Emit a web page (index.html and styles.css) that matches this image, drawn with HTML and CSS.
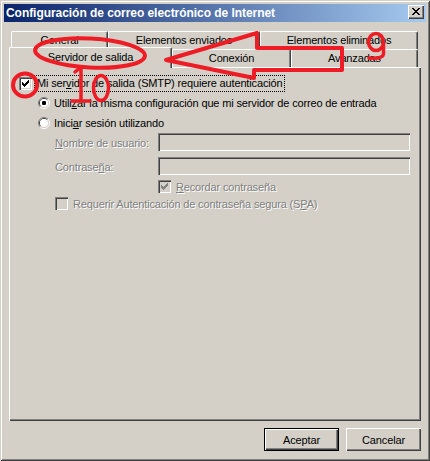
FILE: index.html
```html
<!DOCTYPE html>
<html lang="es">
<head>
<meta charset="utf-8">
<title>Configuración de correo electrónico de Internet</title>
<link rel="stylesheet" href="styles.css">
</head>
<body>
<div class="window">
  <div class="titlebar">
    <span class="title">Configuración de correo electrónico de Internet</span>
    <div class="close">
      <svg width="16" height="14" viewBox="0 0 16 14"><path d="M4 3h2v1H4zM10 3h2v1h-2zM5 4h2v1H5zM9 4h2v1H9zM6 5h4v1H6zM7 6h2v1H7zM6 7h4v1H6zM5 8h2v1H5zM9 8h2v1H9zM4 9h2v1H4zM10 9h2v1h-2z" fill="#000"/></svg>
    </div>
  </div>
  <div class="client">
    <div class="tabs">
      <div class="tabrow row1">
        <div class="tab t-general">General</div>
        <div class="tab t-enviados">Elementos enviados</div>
        <div class="tab t-eliminados">Elementos eliminados</div>
      </div>
      <div class="tabrow row2">
        <div class="tab selected t-servidor">Servidor de salida</div>
        <div class="tab t-conexion">Conexión</div>
        <div class="tab t-avanzadas">Avanzadas</div>
      </div>
    </div>
    <div class="panel">
      <div class="row row-auth">
        <span class="cb"><svg width="13" height="13" viewBox="0 0 13 13"><path d="M3 5h1v3H3zM4 6h1v3H4zM5 7h1v3H5zM6 6h1v3H6zM7 5h1v3H7zM8 4h1v3H8zM9 3h1v3H9z" fill="#000"/></svg></span>
        <span class="focus">Mi ser<u>v</u>idor de salida (SMTP) requiere autenticación</span>
      </div>
      <div class="row row-radio first">
        <svg class="radio" width="12" height="12" viewBox="0 0 12 12">
          <path d="M2.1 9.9A5.5 5.5 0 0 1 9.9 2.1" stroke="#808080" fill="none"/>
          <path d="M9.9 2.1A5.5 5.5 0 0 1 2.1 9.9" stroke="#fff" fill="none"/>
          <path d="M2.8 9.2A4.5 4.5 0 0 1 9.2 2.8" stroke="#404040" fill="none"/>
          <path d="M9.2 2.8A4.5 4.5 0 0 1 2.8 9.2" stroke="#D4D0C8" fill="none"/>
          <circle cx="6" cy="6" r="4" fill="#fff"/>
          <rect x="4" y="4" width="4" height="4" rx="1.2" fill="#000"/>
        </svg>
        <span class="lbl">Utili<u>z</u>ar la misma configuración que mi servidor de correo de entrada</span>
      </div>
      <div class="row row-radio second">
        <svg class="radio" width="12" height="12" viewBox="0 0 12 12">
          <path d="M2.1 9.9A5.5 5.5 0 0 1 9.9 2.1" stroke="#808080" fill="none"/>
          <path d="M9.9 2.1A5.5 5.5 0 0 1 2.1 9.9" stroke="#fff" fill="none"/>
          <path d="M2.8 9.2A4.5 4.5 0 0 1 9.2 2.8" stroke="#404040" fill="none"/>
          <path d="M9.2 2.8A4.5 4.5 0 0 1 2.8 9.2" stroke="#D4D0C8" fill="none"/>
          <circle cx="6" cy="6" r="4" fill="#fff"/>
        </svg>
        <span class="lbl">Inici<u>a</u>r sesión utilizando</span>
      </div>
      <div class="row row-field user">
        <span class="flabel disabled"><u>N</u>ombre de usuario:</span>
        <span class="field"></span>
      </div>
      <div class="row row-field pass">
        <span class="flabel disabled">Contrase<u>ñ</u>a:</span>
        <span class="field"></span>
      </div>
      <div class="row row-check remember">
        <span class="cb off"><svg width="13" height="13" viewBox="0 0 13 13"><path d="M3 5h1v3H3zM4 6h1v3H4zM5 7h1v3H5zM6 6h1v3H6zM7 5h1v3H7zM8 4h1v3H8zM9 3h1v3H9z" fill="#808080"/></svg></span>
        <span class="lbl disabled"><u>R</u>ecordar contraseña</span>
      </div>
      <div class="row row-check spa">
        <span class="cb off"></span>
        <span class="lbl disabled">Requerir Autenticación de contraseña segura (S<u>P</u>A)</span>
      </div>
    </div>
    <div class="buttons">
      <button class="btn default">Aceptar</button>
      <button class="btn">Cancelar</button>
    </div>
  </div>
  <svg class="annot" width="430" height="461" viewBox="0 0 430 461">
    <g fill="none" stroke="#EE1C25" stroke-linecap="round" stroke-linejoin="round">
      <ellipse cx="90" cy="53" rx="55" ry="14.5" stroke-width="4" transform="rotate(3 90 53)"/>
      <path d="M166 60 L257 33 L257 48 L342 48 L342 70 L254 70 L254 78 Z" stroke-width="4"/>
      <ellipse cx="25" cy="85" rx="12" ry="11.5" stroke-width="4"/>
      <path d="M75 72 L81 67 L81 101 M72 101 L90 101" stroke-width="3.5"/>
      <ellipse cx="101" cy="88" rx="7.5" ry="12.5" stroke-width="3.5"/>
      <ellipse cx="376" cy="42" rx="7.5" ry="8.5" stroke-width="3.5"/>
      <path d="M383.5 43 L383.5 54 Q383 59 369 58" stroke-width="3.5"/>
    </g>
  </svg>
</div>
</body>
</html>
```
FILE: styles.css
```css
* { box-sizing: border-box; }
html, body { margin: 0; padding: 0; }
body {
  width: 430px;
  height: 461px;
  overflow: hidden;
  background: #D4D0C8;
  font-family: "Liberation Sans", Arial, sans-serif;
  font-size: 11px;
  letter-spacing: -0.15px;
  color: #000;
}
u { text-decoration: underline; text-underline-offset: 1px; }

.window {
  position: relative;
  width: 430px;
  height: 461px;
  padding: 4px;
  background: #D4D0C8;
  display: flex;
  flex-direction: column;
  box-shadow: inset 1px 1px #D4D0C8, inset -1px -1px #404040, inset 2px 2px #fff, inset -2px -2px #808080;
}

.titlebar {
  height: 18px;
  flex: none;
  display: flex;
  align-items: center;
  padding: 0 2px 0 2px;
  background: linear-gradient(to right, #0A246A, #A6CAF0);
}
.title {
  color: #fff;
  font-weight: bold;
  font-size: 12px;
  letter-spacing: -0.05px;
  white-space: nowrap;
}
.close {
  margin-left: auto;
  align-self: flex-start;
  margin-top: 1px;
  width: 16px;
  height: 14px;
  background: #D4D0C8;
  box-shadow: inset 1px 1px #fff, inset -1px -1px #404040, inset -2px -2px #808080;
}
.close svg { display: block; }

.client {
  flex: 1;
  display: flex;
  flex-direction: column;
  padding: 9px 5px 6px 5px;
}

.tabs { flex: none; }
.tabrow {
  display: flex;
  align-items: flex-start;
  height: 18px;
}
.row1 { padding-left: 2px; }
.tab {
  height: 18px;
  border-top: 1px solid #fff;
  border-left: 1px solid #fff;
  border-right: 1px solid #404040;
  border-radius: 2px 2px 0 0;
  box-shadow: inset -1px 0 #808080;
  background: #D4D0C8;
  text-align: center;
  line-height: 17px;
  white-space: nowrap;
}
.t-general { width: 97px; }
.t-enviados { width: 152px; }
.t-eliminados { width: 158px; }
.t-servidor { width: 163px; }
.t-conexion { width: 119px; }
.t-avanzadas { width: 127px; }
.tab.selected {
  position: relative;
  z-index: 2;
  height: 21px;
  margin-top: -2px;
  line-height: 19px;
}

.panel {
  flex: 1;
  padding: 8px 0 0 10px;
  box-shadow: inset 1px 1px #fff, inset -1px -1px #404040, inset -2px -2px #808080;
}
.row { display: flex; align-items: center; }
.row-auth { height: 17px; }
.cb {
  flex: none;
  width: 13px;
  height: 13px;
  background: #fff;
  box-shadow: inset 1px 1px #808080, inset 2px 2px #404040, inset -1px -1px #fff, inset -2px -2px #D4D0C8;
}
.cb svg { display: block; }
.cb.off { background: #D4D0C8; }
.focus {
  margin-left: 2px;
  height: 17px;
  line-height: 15px;
  padding: 0 2px 0 2px;
  border: 1px dotted #000;
  white-space: nowrap;
}
.row-radio { height: 14px; margin-left: 19px; }
.row-radio.first { margin-top: 4px; }
.row-radio.second { margin-top: 6px; }
.radio { flex: none; display: block; }
.row-radio .lbl { margin-left: 4px; white-space: nowrap; }

.row-field { height: 18px; margin-left: 36px; }
.row-field.user { margin-top: 3px; }
.row-field.pass { margin-top: 6px; }
.flabel { width: 103px; padding-top: 2px; white-space: nowrap; }
.field {
  width: 252px;
  height: 18px;
  background: #D4D0C8;
  box-shadow: inset 1px 1px #808080, inset 2px 2px #404040, inset -1px -1px #fff, inset -2px -2px #D4D0C8;
}
.row-check { height: 13px; }
.row-check.remember { margin-top: 5px; margin-left: 139px; }
.row-check.spa { margin-top: 4px; margin-left: 36px; }
.row-check .lbl { margin-left: 5px; white-space: nowrap; }

.disabled { color: #808080; text-shadow: 1px 1px 0 #fff; }

.buttons {
  flex: none;
  display: flex;
  justify-content: flex-end;
  gap: 7px;
  margin-top: 7px;
}
.btn {
  width: 75px;
  height: 23px;
  padding: 0;
  border: none;
  background: #D4D0C8;
  font-family: "Liberation Sans", Arial, sans-serif;
  font-size: 11px;
  letter-spacing: -0.15px;
  color: #000;
  box-shadow: inset 1px 1px #fff, inset -1px -1px #404040, inset -2px -2px #808080;
}
.btn.default {
  border: 1px solid #000;
}

.annot {
  position: absolute;
  left: 0;
  top: 0;
  z-index: 10;
  pointer-events: none;
}
```
